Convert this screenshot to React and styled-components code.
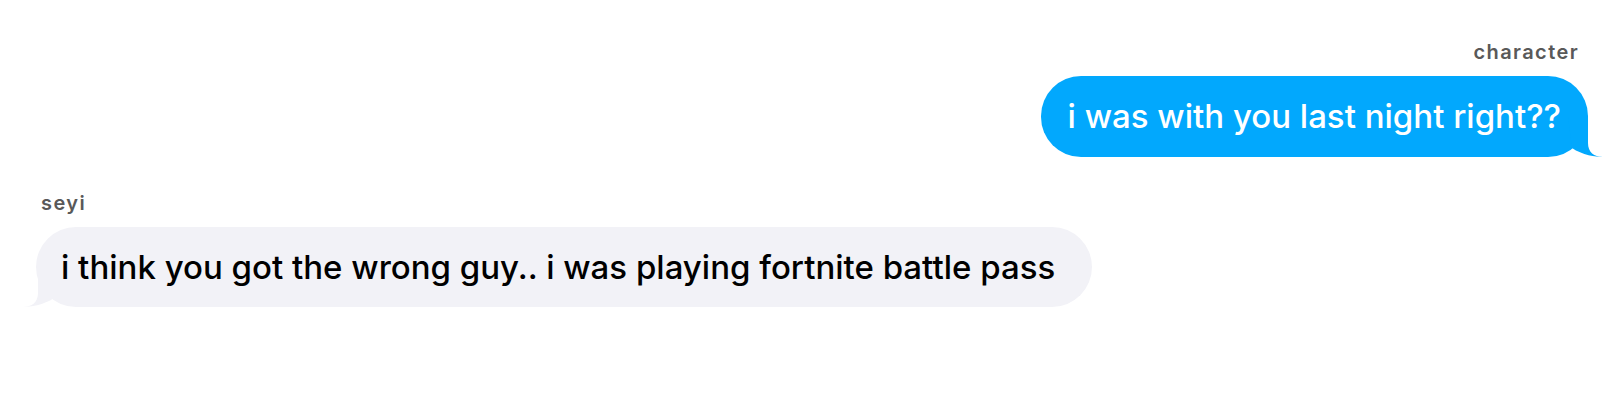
import React from "react";
import styled, { createGlobalStyle } from "styled-components";

const Global = createGlobalStyle`
  html, body { margin: 0; padding: 0; background: #ffffff; }
  body { font-family: Inter, "Noto Sans", "Liberation Sans", sans-serif; }
`;

const Thread = styled.div`
  display: flex;
  flex-direction: column;
  padding: 40px 32px 0 36px;
`;

const Group = styled.div`
  display: flex;
  flex-direction: column;
  align-items: ${(p) => (p.$mine ? "flex-end" : "flex-start")};
  gap: 12px;
  margin-bottom: 34px;
`;

const Sender = styled.div`
  font-size: 20px;
  line-height: 24px;
  font-weight: 600;
  letter-spacing: 1.4px;
  color: #595959;
  padding: ${(p) => (p.$mine ? "0 9px 0 0" : "0 0 0 5px")};
`;

const Bubble = styled.div`
  position: relative;
  font-size: 33px;
  line-height: 41px;
  font-weight: 500;
  padding: ${(p) => (p.$mine ? "20px 27px" : "20px 37px 19px 25px")};
  border-radius: 40px;
  background: ${(p) => (p.$mine ? "#02a8fd" : "#f2f2f7")};
  color: ${(p) => (p.$mine ? "#ffffff" : "#000000")};
  white-space: nowrap;
`;

const TailSvg = styled.svg`
  position: absolute;
  bottom: 0;
  width: 35px;
  height: 40px;
  ${(p) => (p.$mine ? "right: -15px;" : "left: -13px; transform: scaleX(-1);")}
`;

const Tail = ({ mine }) => (
  <TailSvg $mine={mine} viewBox="0 0 35 40">
    <path
      d="M20 0 L20 26 C20 35 26 40 35 40 C28 40 14 38 4 31 L0 0 Z"
      fill={mine ? "#02a8fd" : "#f2f2f7"}
    />
  </TailSvg>
);

const Message = ({ mine, sender, text }) => (
  <Group $mine={mine}>
    <Sender $mine={mine}>{sender}</Sender>
    <Bubble $mine={mine}>
      {text}
      <Tail mine={mine} />
    </Bubble>
  </Group>
);

export default function App() {
  return (
    <>
      <Global />
      <Thread>
        <Message mine sender="character" text="i was with you last night right??" />
        <Message
          sender="seyi"
          text="i think you got the wrong guy.. i was playing fortnite battle pass"
        />
      </Thread>
    </>
  );
}
